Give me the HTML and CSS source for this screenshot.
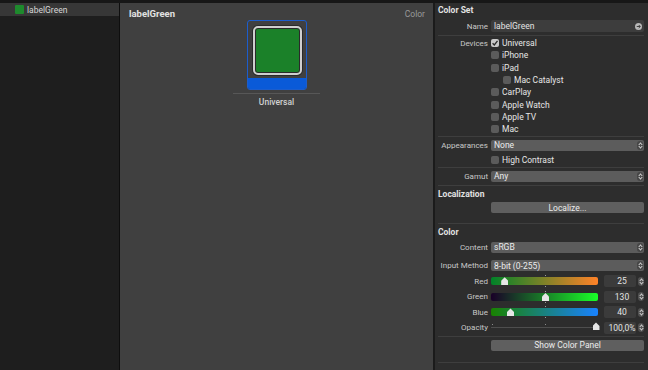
FILE: index.html
```html
<!DOCTYPE html>
<html lang="en">
<head>
    <meta charset="UTF-8">
    <title>labelGreen</title>
    <link rel="stylesheet" href="styles.css">
</head>
<body>
    <div class="topbar"></div>
    <div class="main">
        <div class="sidebar">
            <div class="asset selected">
                <span class="asset-swatch"></span>
                <span>labelGreen</span>
            </div>
        </div>

        <div class="editor">
            <div class="editor-head">
                <span class="editor-title">labelGreen</span>
                <span class="editor-type">Color</span>
            </div>
            <div class="slot">
                <div class="slot-frame">
                    <div class="slot-well"><div class="slot-color"></div></div>
                    <div class="slot-bar"></div>
                </div>
                <div class="slot-line"></div>
                <div class="slot-name">Universal</div>
            </div>
        </div>

        <div class="inspector">
            <div class="section-title first">Color Set</div>
            <div class="row name-row">
                <span class="lbl">Name</span>
                <div class="field">labelGreen
                    <svg class="go" width="7" height="7" viewBox="0 0 8 8"><circle cx="4" cy="4" r="4" fill="#b9b9b9"/><path d="M2 4h4M4.3 2.3 6 4 4.3 5.7" stroke="#3a3a3a" stroke-width="1.1" fill="none"/></svg>
                </div>
            </div>
            <div class="sep sep-a"></div>

            <div class="checks">
                <div class="row check-row">
                    <span class="lbl">Devices</span>
                    <span class="box on"><svg width="8" height="8" viewBox="0 0 8 8"><path d="M1.6 4.2 3.3 5.9 6.5 1.8" stroke="#2a2a2a" stroke-width="1.3" fill="none"/></svg></span>
                    <span class="opt">Universal</span>
                </div>
                <div class="row check-row"><span class="lbl"></span><span class="box"></span><span class="opt">iPhone</span></div>
                <div class="row check-row"><span class="lbl"></span><span class="box"></span><span class="opt">iPad</span></div>
                <div class="row check-row sub"><span class="lbl"></span><span class="box"></span><span class="opt">Mac Catalyst</span></div>
                <div class="row check-row"><span class="lbl"></span><span class="box"></span><span class="opt">CarPlay</span></div>
                <div class="row check-row"><span class="lbl"></span><span class="box"></span><span class="opt">Apple Watch</span></div>
                <div class="row check-row"><span class="lbl"></span><span class="box"></span><span class="opt">Apple TV</span></div>
                <div class="row check-row"><span class="lbl"></span><span class="box"></span><span class="opt">Mac</span></div>
            </div>
            <div class="sep sep-b"></div>

            <div class="row popup-row">
                <span class="lbl">Appearances</span>
                <div class="popup">None<span class="arrows"></span></div>
            </div>
            <div class="row check-row"><span class="lbl"></span><span class="box"></span><span class="opt">High Contrast</span></div>
            <div class="sep sep-c"></div>

            <div class="row popup-row">
                <span class="lbl">Gamut</span>
                <div class="popup">Any<span class="arrows"></span></div>
            </div>
            <div class="sep sep-d"></div>

            <div class="section-title">Localization</div>
            <div class="row btn-row">
                <span class="lbl"></span>
                <div class="button">Localize...</div>
            </div>
            <div class="sep sep-e"></div>

            <div class="section-title">Color</div>
            <div class="row content-row">
                <span class="lbl">Content</span>
                <div class="popup">sRGB<span class="arrows"></span></div>
            </div>
            <div class="row method-row">
                <span class="lbl">Input Method</span>
                <div class="popup">8-bit (0-255)<span class="arrows"></span></div>
            </div>

            <div class="row slider-row first-slider">
                <span class="lbl">Red</span>
                <div class="track red"><span class="tick"></span><span class="thumb" style="left: 13.7px"></span></div>
                <div class="value">25</div>
                <span class="stepper"></span>
            </div>
            <div class="row slider-row">
                <span class="lbl">Green</span>
                <div class="track green"><span class="tick"></span><span class="thumb" style="left: 54.5px"></span></div>
                <div class="value">130</div>
                <span class="stepper"></span>
            </div>
            <div class="row slider-row">
                <span class="lbl">Blue</span>
                <div class="track blue"><span class="tick"></span><span class="thumb" style="left: 19.5px"></span></div>
                <div class="value">40</div>
                <span class="stepper"></span>
            </div>
            <div class="row slider-row">
                <span class="lbl">Opacity</span>
                <div class="track opacity"><span class="dot" style="left: 1%"></span><span class="dot" style="left: 50%"></span><span class="thumb" style="left: 105px"></span></div>
                <div class="value">100,0%</div>
                <span class="stepper"></span>
            </div>
            <div class="sep sep-f"></div>

            <div class="row btn-row panel-row">
                <span class="lbl"></span>
                <div class="button">Show Color Panel</div>
            </div>
            <div class="sep sep-g"></div>
        </div>
    </div>
</body>
</html>
```

FILE: styles.css
```css
* {
    margin: 0;
    padding: 0;
    box-sizing: border-box;
}

body {
    width: 648px;
    height: 370px;
    overflow: hidden;
    background-color: #1e1e1e;
    font-family: Roboto, "Liberation Sans", sans-serif;
    font-size: 8.5px;
    color: #e4e4e4;
    display: flex;
    flex-direction: column;
}

.topbar {
    height: 3px;
    flex-shrink: 0;
    background-color: #171717;
}

.main {
    flex: 1;
    display: flex;
}

/* asset list */
.sidebar {
    width: 120px;
    background-color: #1e1e1e;
    border-right: 1px solid #0e0e0e;
}

.asset {
    height: 13px;
    display: flex;
    align-items: center;
    padding-left: 15px;
    gap: 3px;
    color: #d6d6d6;
}

.asset.selected {
    background-color: #373737;
}

.asset-swatch {
    width: 9px;
    height: 9px;
    background-color: #1e8a2d;
    border-radius: 1px;
}

/* editor */
.editor {
    width: 315px;
    background-color: #404040;
    border-right: 2px solid #1b1b1b;
}

.editor-head {
    display: flex;
    justify-content: space-between;
    align-items: center;
    padding: 3px 8px 0 9px;
    height: 17px;
}

.editor-title {
    font-size: 9.5px;
    font-weight: 700;
    color: #e2e2e2;
}

.editor-type {
    color: #9a9a9a;
    margin-top: 2px;
}

.slot {
    width: 87px;
    margin-left: 113px;
    display: flex;
    flex-direction: column;
    align-items: center;
}

.slot-frame {
    width: 60px;
    height: 70px;
    border: 1px solid #1c5dcc;
    border-radius: 3px;
    overflow: hidden;
    display: flex;
    flex-direction: column;
}

.slot-well {
    height: 57px;
    padding: 5px 0 0 5px;
}

.slot-color {
    width: 49px;
    height: 49px;
    background-color: #1b8129;
    border: 2px solid #cfcfcf;
    border-radius: 5px;
    box-shadow: 0 0 0 1px #2a2a2a, inset 0 0 0 1px #2a2a2a;
}

.slot-bar {
    flex: 1;
    background-color: #0a5ad8;
}

.slot-line {
    width: 87px;
    height: 1px;
    background-color: #575757;
    margin-top: 3px;
}

.slot-name {
    margin-top: 3px;
    font-weight: 500;
    color: #d2d2d2;
}

/* inspector */
.inspector {
    flex: 1;
    background-color: #2d2d2d;
    padding: 0 4px 0 3px;
    display: flex;
    flex-direction: column;
}

.section-title {
    height: 16px;
    display: flex;
    align-items: center;
    font-weight: 700;
    color: #e2e2e2;
}

.section-title.first {
    height: 13px;
}

.row {
    display: flex;
    align-items: center;
    height: 16px;
    white-space: nowrap;
}

.lbl {
    width: 50px;
    margin-right: 3px;
    font-size: 8px;
    color: #c8c8c8;
    flex-shrink: 0;
    display: flex;
    justify-content: flex-end;
}

.name-row {
    margin-top: 3px;
    height: 14px;
}

.field {
    flex: 1;
    height: 12px;
    background-color: #3d3d3d;
    border-radius: 2px;
    padding: 0 2px 0 3px;
    display: flex;
    align-items: center;
    justify-content: space-between;
    color: #e2e2e2;
}

.sep {
    height: 1px;
    flex-shrink: 0;
    background-color: #3e3e3e;
}

.sep-a { margin: 2px 0 1px; }
.sep-b { margin: 1px 0 0; }
.sep-c { margin: 1.5px 0 0; }
.sep-d { margin: 1px 0 0; }
.sep-e { margin: 10px 0 0; }
.sep-f { margin: 0; }
.sep-g { margin: 11px 0 0; }

.check-row {
    height: 12.3px;
}

.box {
    width: 8px;
    height: 8px;
    border-radius: 2px;
    background-color: #5b5b5b;
    margin-right: 3px;
    display: flex;
}

.box.on {
    background-color: #c9c9c9;
}

.sub .box {
    margin-left: 12px;
}

.opt {
    color: #e6e6e6;
}

.content-row {
    height: 14px;
}

.method-row {
    margin-top: 4px;
    height: 15px;
}

.popup {
    flex: 1;
    height: 11px;
    background-color: #5c5c5c;
    border-radius: 2px;
    padding-left: 3px;
    display: flex;
    align-items: center;
    justify-content: space-between;
    color: #ececec;
}

.arrows,
.stepper {
    width: 6px;
    height: 9px;
    margin-right: 1px;
    border-radius: 3px;
    background-color: #474747;
    position: relative;
    flex-shrink: 0;
}

.stepper {
    margin: 0 0 0 2px;
    background-color: #505050;
}

.arrows::before,
.arrows::after,
.stepper::before,
.stepper::after {
    content: "";
    position: absolute;
    left: 2px;
    width: 2px;
    height: 2px;
    border-left: 1px solid #cfcfcf;
    border-top: 1px solid #cfcfcf;
}

.arrows::before,
.stepper::before {
    top: 2px;
    transform: rotate(45deg);
}

.arrows::after,
.stepper::after {
    bottom: 2px;
    transform: rotate(-135deg);
}

.btn-row {
    height: 11px;
}

.panel-row {
    margin-top: 3px;
}

.button {
    flex: 1;
    height: 11px;
    background-color: #5f5f5f;
    border-radius: 2px;
    display: flex;
    align-items: center;
    justify-content: center;
    color: #ececec;
}

.slider-row {
    height: 15.5px;
}

.first-slider {
    height: 16px;
}

.track {
    width: 107px;
    height: 8px;
    flex-shrink: 0;
    border-radius: 2px;
    position: relative;
}

.track.red {
    background: linear-gradient(to right, rgb(0,130,40), rgb(255,130,40));
}

.track.green {
    background: linear-gradient(to right, rgb(25,0,40), rgb(25,255,40));
}

.track.blue {
    background: linear-gradient(to right, rgb(25,130,0), rgb(25,130,255));
}

.track.opacity {
    height: 1px;
    background-color: #4e4e4e;
    border-radius: 0;
}

.tick {
    position: absolute;
    left: 50%;
    top: -2px;
    width: 1px;
    height: 12px;
    border-top: 1px solid #9a9a9a;
    border-bottom: 1px solid #9a9a9a;
}

.dot {
    position: absolute;
    top: -3px;
    width: 1px;
    height: 1px;
    background-color: #8a8a8a;
}

.thumb {
    position: absolute;
    top: 0;
    width: 7px;
    height: 8px;
    margin-left: -3.5px;
    background-color: #e6e6e6;
    clip-path: polygon(50% 0, 100% 45%, 100% 100%, 0 100%, 0 45%);
}

.opacity .thumb {
    top: -5px;
}

.value {
    width: 32px;
    height: 12px;
    flex-shrink: 0;
    margin-left: 6px;
    background-color: #3b3b3b;
    border-radius: 2px;
    display: flex;
    align-items: center;
    justify-content: center;
    padding-left: 4px;
    color: #e4e4e4;
}
```
